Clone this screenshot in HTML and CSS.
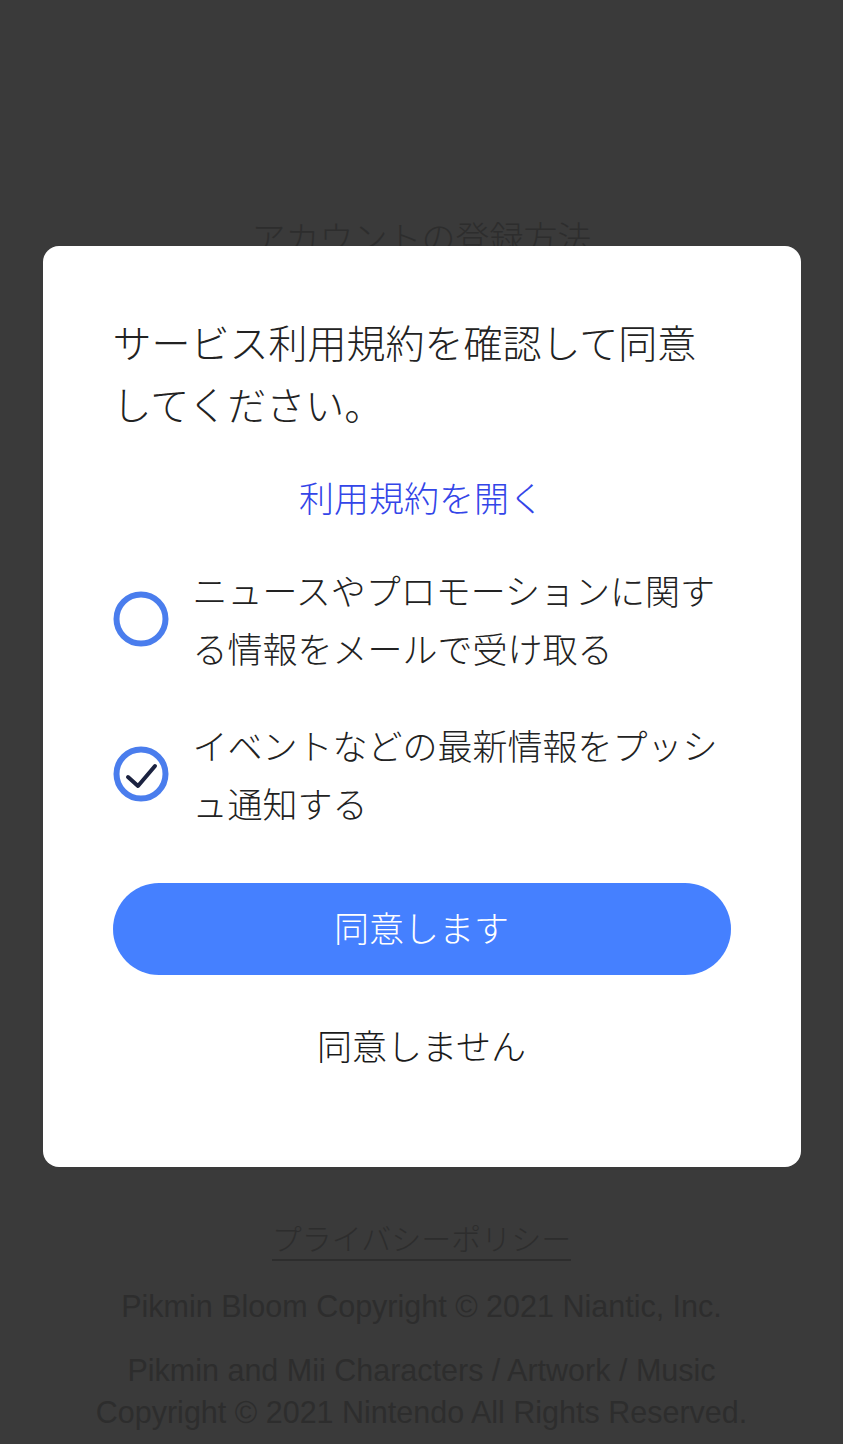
FILE: index.html
```html
<!DOCTYPE html>
<html lang="ja">
<head>
    <meta charset="UTF-8">
    <meta name="viewport" content="width=device-width, initial-scale=1.0">
    <title>Pikmin Bloom - サービス利用規約</title>
    <link rel="stylesheet" href="styles.css">
</head>
<body>
    <!-- Dimmed page behind the dialog -->
    <div class="page">
        <div class="hero"></div>
        <h2 class="page-title">アカウントの登録方法</h2>
        <div class="page-body"></div>
        <footer class="page-footer">
            <a class="privacy-link" href="#">プライバシーポリシー</a>
            <p class="copyright">Pikmin Bloom Copyright © 2021 Niantic, Inc.</p>
            <p class="copyright copyright-long">Pikmin and Mii Characters / Artwork / Music<br>Copyright © 2021 Nintendo All Rights Reserved.</p>
        </footer>
    </div>

    <!-- Terms dialog -->
    <div class="overlay">
        <div class="dialog">
            <p class="dialog-title">サービス利用規約を確認して同意してください。</p>
            <a class="terms-link" href="#">利用規約を開く</a>

            <label class="option">
                <span class="check">
                    <svg viewBox="0 0 56 56" width="56" height="56">
                        <circle cx="28" cy="28" r="24.5" fill="none" stroke="#4a7ded" stroke-width="6"/>
                    </svg>
                </span>
                <span class="option-text">ニュースやプロモーションに関する情報をメールで受け取る</span>
            </label>

            <label class="option">
                <span class="check">
                    <svg viewBox="0 0 56 56" width="56" height="56">
                        <circle cx="28" cy="28" r="24.5" fill="none" stroke="#4a7ded" stroke-width="6"/>
                        <path d="M15 31 L25 40 L42 20" fill="none" stroke="#1b2240" stroke-width="4" stroke-linecap="round" stroke-linejoin="round"/>
                    </svg>
                </span>
                <span class="option-text">イベントなどの最新情報をプッシュ通知する</span>
            </label>

            <button class="btn-agree" type="button">同意します</button>
            <button class="btn-decline" type="button">同意しません</button>
        </div>
    </div>
</body>
</html>
```

FILE: styles.css
```css
/* Basic page styling */
body {
    margin: 0;
    background-color: #3a3a3a;
    font-family: "Noto Sans CJK JP", "Noto Sans", sans-serif;
    overflow: hidden;
}

/* Background page (dimmed) */
.page {
    height: 1444px;
    color: #2d2d2d;
    text-align: center;
}

.hero {
    height: 213px;
}

.page-title {
    margin: 0;
    font-size: 34px;
    font-weight: 300;
    line-height: 48px;
}

.page-body {
    height: 956px;
}

.privacy-link {
    display: inline-block;
    color: #2d2d2d;
    font-size: 30px;
    font-weight: 300;
    line-height: 40px;
    text-decoration: none;
    border-bottom: 2px solid #2d2d2d;
    padding-bottom: 2px;
}

.copyright {
    margin: 24px 0 0;
    font-family: "Liberation Sans", sans-serif;
    font-size: 30.5px;
    line-height: 42px;
}

.copyright-long {
    margin-top: 22px;
}

/* Overlay and dialog */
.overlay {
    position: fixed;
    top: 0;
    left: 0;
    right: 0;
    bottom: 0;
    display: flex;
    justify-content: center;
    align-items: flex-start;
    padding-top: 246px;
}

.dialog {
    width: 758px;
    box-sizing: border-box;
    background: #fff;
    border-radius: 16px;
    padding: 64px 70px 97px;
    display: flex;
    flex-direction: column;
    color: #222;
}

.dialog-title {
    margin: 0;
    font-size: 39px;
    font-weight: 300;
    line-height: 62px;
}

.terms-link {
    margin-top: 38px;
    align-self: center;
    color: #3345e8;
    font-size: 35px;
    font-weight: 300;
    line-height: 50px;
    text-decoration: none;
}

.option {
    margin-top: 39px;
    display: flex;
    align-items: center;
    gap: 24px;
}

.check {
    flex: none;
    display: flex;
}

.option-text {
    font-size: 35px;
    font-weight: 300;
    line-height: 58px;
}

.btn-agree {
    margin-top: 51px;
    height: 92px;
    padding: 0 0 5px;
    border: none;
    border-radius: 46px;
    background: #4580ff;
    color: #fff;
    font-family: inherit;
    font-size: 35px;
    font-weight: 300;
}

.btn-decline {
    margin-top: 45px;
    border: none;
    background: none;
    padding: 0;
    color: #1a1a1a;
    font-family: inherit;
    font-size: 35px;
    font-weight: 300;
    line-height: 50px;
}
```
